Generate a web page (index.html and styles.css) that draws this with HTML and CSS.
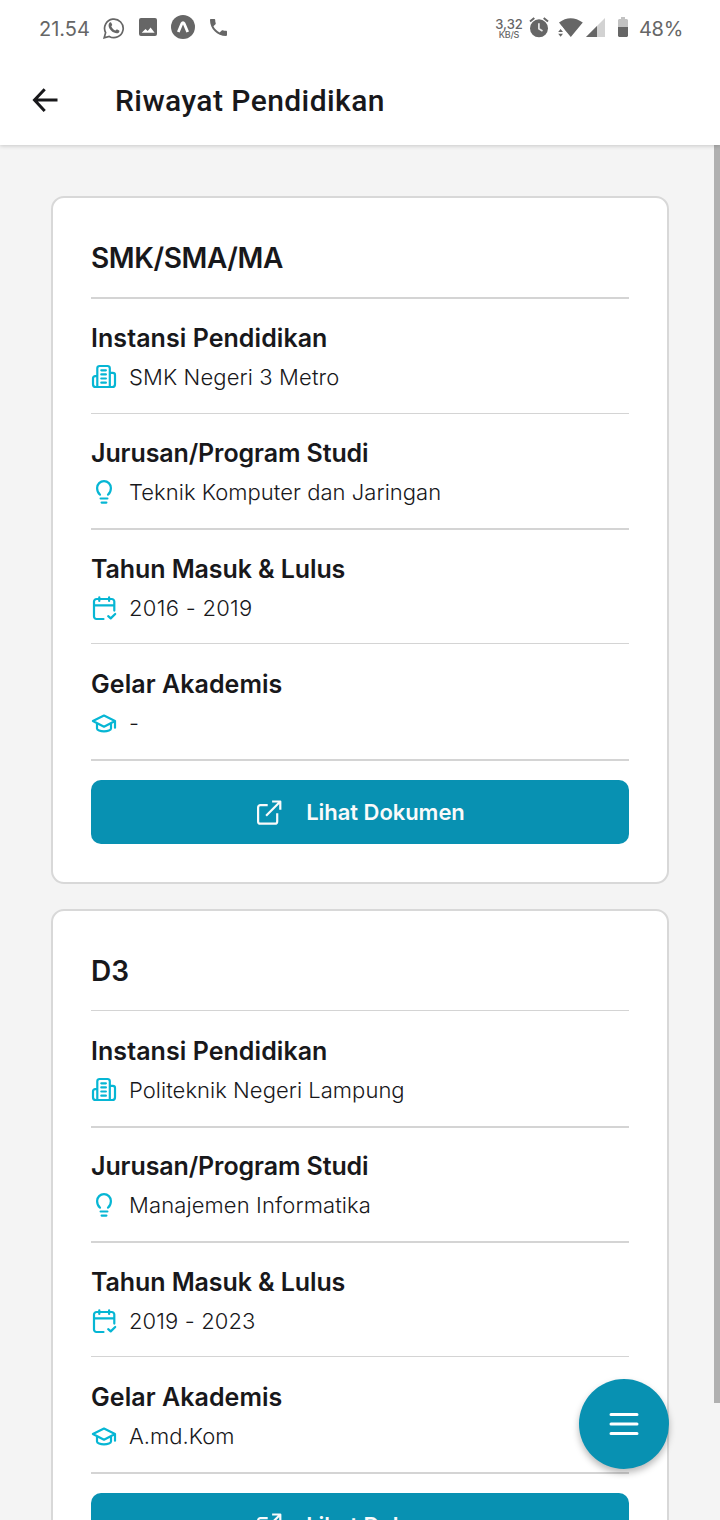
FILE: index.html
```html
<!DOCTYPE html>
<html lang="id">
<head>
<meta charset="utf-8">
<title>Riwayat Pendidikan</title>
<link rel="stylesheet" href="styles.css">
</head>
<body>
<svg class="defs" width="0" height="0" aria-hidden="true">
  <symbol id="building" viewBox="0 0 26 26">
    <path d="M6.300 23V4.200A2.200 2.200 0 0 1 8.500 2h8.100a2.200 2.200 0 0 1 2.200 2.200V23M6.300 12.200H4.200A2.200 2.200 0 0 0 2 14.400v5.800A2.800 2.800 0 0 0 4.800 23h16.400a2.800 2.800 0 0 0 2.800-2.800V11a2.200 2.200 0 0 0-2.200-2.200h-3M10.300 6.300h4.600M10.300 10.400h4.600M10.300 14.500h4.600M10.300 18.700h4.600"/>
  </symbol>
  <symbol id="bulb" viewBox="0 0 26 26">
    <path d="M9 15.600C7 14.200 6.100 11.500 6.100 9a6.900 6.900 0 0 1 13.800 0c0 2.500-.9 5.200-2.900 6.600M9.600 19.500h6.800M10.600 23.600h4.800"/>
  </symbol>
  <symbol id="calendar" viewBox="0 0 26 26">
    <path d="M12.500 24H5.400A2.400 2.400 0 0 1 3 21.600V6.600A2.600 2.600 0 0 1 5.600 4h15.100a2.600 2.600 0 0 1 2.600 2.600v9M3 10.400h20.300M8.300 2.300V6M18.100 2.300V6M17.200 21.200l2.500 2.200 4.500-4.400"/>
  </symbol>
  <symbol id="cap" viewBox="0 0 26 26">
    <path d="M1.900 11 13 5.500 24 11 13 16.700ZM24 11v6.700M6 13.300v5.100c0 1.500 3.200 2.900 7 2.900s7-1.400 7-2.900v-5.100"/>
  </symbol>
  <symbol id="external" viewBox="0 0 26 26">
    <path d="M11.700 6.100H4.400a2.300 2.300 0 0 0-2.300 2.300v14a2.300 2.300 0 0 0 2.300 2.300h14.500a2.300 2.300 0 0 0 2.300-2.300v-8.200M10.100 16.700 24.300 2.500M16.100 2.500h8.200v8.200"/>
  </symbol>
</svg>
<div class="screen">
  <div class="statusbar">
    <span class="clock">21.54</span>
    <svg class="s-chat" width="22" height="22" viewBox="0 0 22 22"><path d="M1.200 20.800 2.600 15.600A9.300 9.300 0 1 1 6.200 19.400Z" fill="none" stroke="#666" stroke-width="1.700"/><path d="M6.800 5.600c.5-.5 1.300-.4 1.600.3l.8 1.900c.1.500-.7 1.200-.9 1.600.9 1.900 2.300 3.300 4.300 4.100.5-.3 1.100-1.300 1.600-1.100l2 1c.5.400.2 1.700-.5 2.300-1.200 1-2.900.8-4.700-.1-2.400-1.200-4.400-3.300-5.200-5.700-.5-1.700 0-3.500 1-4.300Z" fill="#666"/></svg>
    <svg class="s-image" width="18" height="18" viewBox="0 0 18 18"><path fill="#666" fill-rule="evenodd" d="M2 0h14a2 2 0 0 1 2 2v14a2 2 0 0 1-2 2H2a2 2 0 0 1-2-2V2a2 2 0 0 1 2-2ZM2.700 14.700h12.900l-4-5.300-2.900 3.500-2.200-2Z"/></svg>
    <svg class="s-expo" width="24" height="24" viewBox="0 0 24 24"><circle cx="12" cy="12" r="12" fill="#666"/><path d="M7.300 17 11 8.300c.5-1 1.500-1 2 0l3.700 8.700" fill="none" stroke="#fff" stroke-width="2.800" stroke-linejoin="round"/></svg>
    <svg class="s-phone" width="17" height="17" viewBox="3 3 18 18"><path fill="#666" d="M6.620 10.790c1.440 2.830 3.760 5.140 6.590 6.590l2.200-2.200c.27-.27.67-.36 1.020-.24 1.120.37 2.330.57 3.570.57.550 0 1 .45 1 1V20c0 .55-.45 1-1 1C10.610 21 3 13.390 3 4c0-.55.45-1 1-1h3.500c.55 0 1 .45 1 1 0 1.250.2 2.450.57 3.570.11.35.03.74-.25 1.020Z"/></svg>
    <span class="speed"><span class="rate">3,32</span><span class="unit">KB/S</span></span>
    <svg class="s-alarm" width="20" height="21" viewBox="0 0 20 21"><circle cx="10" cy="11.300" r="9" fill="#666"/><path d="M1 4.500 5.300 1M19 4.500 14.700 1" stroke="#666" stroke-width="2"/><path d="M9.900 6.300v5.400l3.600 2.200" fill="none" stroke="#e8e8e8" stroke-width="1.700"/></svg>
    <svg class="s-wifi" width="25" height="19" viewBox="0 0 25 19"><path fill="#666" d="M1 4.500Q12.500-4 24.800 4.500L12.800 19 6.500 11.400 4.500 9Z"/><path fill="#fff" d="M0 8.500h4L6.500 12v7H0Z"/><path fill="#666" d="m.2 14 2.400-3 2.400 3ZM.2 15.700h4.800l-2.400 3Z"/></svg>
    <svg class="s-signal" width="19" height="19" viewBox="0 0 19 19"><path fill="#d2d2d2" d="M19 0v19H0Z"/><path fill="#666" d="M11 8v11H0Z"/></svg>
    <svg class="s-battery" width="10" height="20" viewBox="0 0 10 20"><path fill="#c2c2c2" d="M3 0h4v2h2l1 1v7H0V3l1-1h2Z"/><path fill="#666" d="M0 10h10v9l-1 1H1l-1-1Z"/></svg>
    <span class="percent">48%</span>
  </div>
  <header class="appbar">
    <svg class="back" width="28" height="28" viewBox="0 0 28 28"><path d="M13.700 2.200 3.500 13.100l10.200 11M3.500 13.100H26.500"/></svg>
    <h1 class="title">Riwayat Pendidikan</h1>
  </header>
  <main class="content">
    <section class="card">
      <h2 class="level thick">SMK/SMA/MA</h2>
      <div class="row"><h3 class="label wide">Instansi Pendidikan</h3><p class="value"><svg class="icon"><use href="#building"/></svg><span>SMK Negeri 3 Metro</span></p></div>
      <div class="row thick"><h3 class="label">Jurusan/Program Studi</h3><p class="value"><svg class="icon"><use href="#bulb"/></svg><span class="compact">Teknik Komputer dan Jaringan</span></p></div>
      <div class="row short"><h3 class="label">Tahun Masuk &amp; Lulus</h3><p class="value"><svg class="icon"><use href="#calendar"/></svg><span class="years">2016 - 2019</span></p></div>
      <div class="row thick tall"><h3 class="label wide">Gelar Akademis</h3><p class="value"><svg class="icon"><use href="#cap"/></svg><span>-</span></p></div>
      <button class="document"><svg class="icon"><use href="#external"/></svg><span>Lihat Dokumen</span></button>
    </section>
    <section class="card">
      <h2 class="level">D3</h2>
      <div class="row thick tall"><h3 class="label wide">Instansi Pendidikan</h3><p class="value"><svg class="icon"><use href="#building"/></svg><span class="compact">Politeknik Negeri Lampung</span></p></div>
      <div class="row thick short"><h3 class="label">Jurusan/Program Studi</h3><p class="value"><svg class="icon"><use href="#bulb"/></svg><span>Manajemen Informatika</span></p></div>
      <div class="row short"><h3 class="label">Tahun Masuk &amp; Lulus</h3><p class="value"><svg class="icon"><use href="#calendar"/></svg><span>2019 - 2023</span></p></div>
      <div class="row thick tall"><h3 class="label wide">Gelar Akademis</h3><p class="value"><svg class="icon"><use href="#cap"/></svg><span class="compact">A.md.Kom</span></p></div>
      <button class="document"><svg class="icon"><use href="#external"/></svg><span>Lihat Dokumen</span></button>
    </section>
  </main>
  <div class="scrollbar"></div>
  <button class="fab" aria-label="Menu"><svg width="30" height="24" viewBox="0 0 30 24"><path d="M2 2.500h26M2 12h26M2 21.500h26" stroke="#fff" stroke-width="3" stroke-linecap="round"/></svg></button>
</div>
</body>
</html>
```
FILE: styles.css
```css
* { box-sizing: border-box; }
body { margin: 0; background: #f4f4f4; color: #18181b; font-family: Inter, "Liberation Sans", sans-serif; }
h1, h2, h3, p { margin: 0; }
svg { flex: none; display: block; }
.defs { position: absolute; }
.screen { position: relative; width: 720px; height: 1520px; overflow: hidden; display: flex; flex-direction: column; }
.statusbar { position: relative; z-index: 2; flex: none; display: flex; align-items: flex-start; height: 56px; padding-left: 39px; background: #fff; color: #666; }
.clock { width: 64px; margin-top: 17px; font-size: 20px; line-height: 24px; white-space: nowrap; }
.s-chat { margin-top: 17px; }
.s-image { margin: 18px 0 0 14px; }
.s-expo { margin: 15px 0 0 14px; }
.s-phone { margin: 19px 0 0 15px; }
.speed { display: flex; flex-direction: column; align-items: center; width: 30px; margin: 18px 0 0 267px; }
.rate { font-size: 13px; line-height: 13px; font-weight: 500; }
.unit { font-size: 9px; line-height: 9px; margin-top: -1px; font-weight: 500; letter-spacing: -0.2px; }
.s-alarm { margin: 17px 0 0 5px; }
.s-wifi { margin: 18px 0 0 9px; }
.s-signal { margin: 18px 0 0 3px; }
.s-battery { margin: 17px 0 0 13px; }
.percent { margin: 17px 0 0 11px; font-size: 20px; line-height: 24px; letter-spacing: -0.3px; }
.appbar { position: relative; z-index: 1; flex: none; display: flex; align-items: center; height: 89px; padding-left: 31px; background: #fff; box-shadow: 0 1px 4px rgba(0, 0, 0, 0.18); }
.back { fill: none; stroke: #18181b; stroke-width: 3; }
.title { margin-left: 56px; font-family: Roboto, sans-serif; font-weight: 500; font-size: 30px; letter-spacing: 0.43px; }
.content { display: flex; flex-direction: column; gap: 25px; padding: 51px 51px 0; }
.card { flex: none; height: 688px; padding: 0 38px; border: 2px solid #d8d8d8; border-radius: 13px; background: #fff; }
.level { height: 100px; padding-top: 42px; border-bottom: 1px solid #d4d4d4; font-size: 28px; line-height: 36px; font-weight: 600; }
.level.thick { height: 101px; border-bottom-width: 2px; letter-spacing: -0.4px; }
.row { height: 115px; padding-top: 23px; border-bottom: 1px solid #d4d4d4; }
.row.thick { height: 116px; border-bottom-width: 2px; }
.row.short { height: 114px; }
.row.thick.short { height: 115px; padding-top: 22px; }
.row.thick.tall { height: 117px; padding-top: 24px; }
.label { font-size: 25px; line-height: 32px; font-weight: 600; letter-spacing: -0.1px; white-space: nowrap; }
.label.wide { letter-spacing: 0.06px; }
.value { display: flex; align-items: center; gap: 12px; height: 26px; margin-top: 10px; font-size: 22px; line-height: 26px; font-weight: 300; letter-spacing: 0.12px; white-space: nowrap; }
.compact { letter-spacing: 0.04px; }
.years { letter-spacing: 0.3px; }
.icon { width: 26px; height: 26px; fill: none; stroke: #06b6d4; stroke-width: 2.2; stroke-linecap: round; stroke-linejoin: round; }
.document { display: flex; align-items: center; justify-content: center; gap: 24px; width: 100%; height: 64px; margin-top: 19px; padding: 0 0 0 1px; border: 0; border-radius: 10px; background: #0891b2; color: #fafafa; font: 600 22px Inter, "Liberation Sans", sans-serif; letter-spacing: -0.05px; }
.document .icon { stroke: #fafafa; stroke-linecap: butt; }
.scrollbar { position: absolute; right: 0; top: 145px; width: 6px; height: 1258px; background: #b0b0b0; }
.fab { position: absolute; z-index: 2; left: 579px; top: 1379px; display: flex; align-items: center; justify-content: center; width: 90px; height: 90px; padding: 0; border: 0; border-radius: 50%; background: #0891b2; box-shadow: 0 4px 7px rgba(0, 0, 0, 0.28); }
```
